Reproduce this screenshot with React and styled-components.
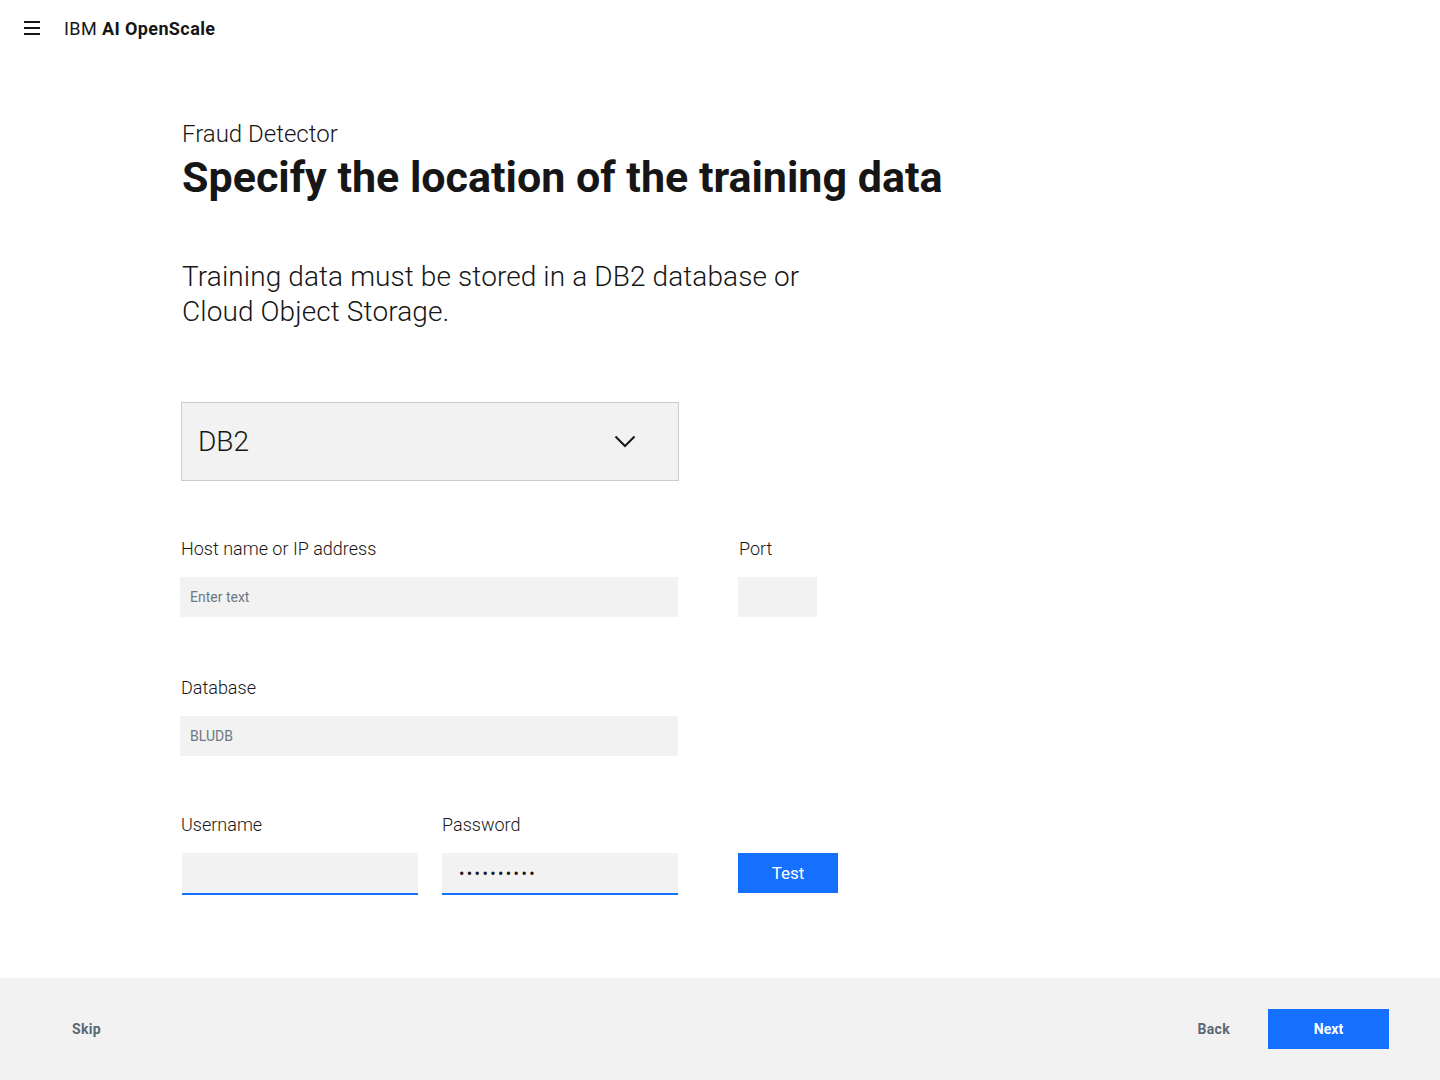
import styled, { createGlobalStyle } from "styled-components";

const GlobalStyle = createGlobalStyle`
   html, body {
      margin: 0;
      padding: 0;
      background: #fff;
      font-family: Roboto, "Noto Sans", sans-serif;
      color: #161616;
   }
   * { box-sizing: border-box; }
`

const Page = styled.div`
   min-height: 100vh;
   display: flex;
   flex-direction: column;
`

const Header = styled.header`
   height: 56px;
   display: flex;
   align-items: center;
   padding-left: 24px;
`

const Burger = styled.button`
   width: 16px;
   height: 14px;
   padding: 0;
   border: 0;
   background: none;
   display: flex;
   flex-direction: column;
   justify-content: space-between;
   margin-right: 24px;
   span {
      display: block;
      height: 2px;
      background: #161616;
   }
`

const Brand = styled.div`
   font-size: 18px;
   letter-spacing: 0.4px;
   b { font-weight: 700; }
`

const Main = styled.main`
   padding: 62px 0 0 182px;
`

const Eyebrow = styled.div`
   font-size: 24px;
   font-weight: 300;
   line-height: 32px;
`

const Title = styled.h1`
   margin: 2px 0 0;
   font-size: 43px;
   font-weight: 700;
   line-height: 50px;
`

const Lead = styled.p`
   margin: 57px 0 0;
   width: 660px;
   font-size: 28px;
   font-weight: 300;
   line-height: 35px;
   letter-spacing: 0.1px;
`

const Select = styled.div`
   margin: 73px 0 0 -1px;
   width: 498px;
   height: 79px;
   background: #f2f2f2;
   border: 1px solid #cccccc;
   display: flex;
   align-items: center;
   justify-content: space-between;
   padding: 0 42px 0 16px;
   font-size: 28px;
   font-weight: 300;
`

const Form = styled.div`
   margin-left: -2px;
`

const Row = styled.div`
   display: flex;
   gap: ${p => p.gap || 60}px;
   margin-top: ${p => p.top}px;
   align-items: flex-end;
`

const Field = styled.div`
   display: flex;
   flex-direction: column;
   width: ${p => p.w}px;
   margin-left: ${p => p.shift || 0}px;
`

const Label = styled.label`
   font-size: 18px;
   font-weight: 300;
   line-height: 24px;
   margin-left: ${p => (p.indent === undefined ? 1 : p.indent)}px;
   margin-bottom: 16px;
`

const Input = styled.div`
   height: ${p => (p.active ? 42 : 40)}px;
   margin-left: ${p => p.indent || 0}px;
   background: #f2f2f2;
   border-bottom: ${p => (p.active ? "2px solid #1670ff" : "0")};
   display: flex;
   align-items: center;
   padding-left: ${p => (p.dots ? 17 : 10)}px;
   font-size: ${p => (p.dots ? 16 : 14)}px;
   color: ${p => (p.dots ? "#161616" : "#6f7782")};
   letter-spacing: ${p => (p.dots ? "2.4px" : "0")};
`

const Button = styled.button`
   width: ${p => p.w}px;
   height: 40px;
   border: 0;
   background: #1670ff;
   color: #fff;
   font-family: Roboto, sans-serif;
   font-size: ${p => (p.small ? 14 : 17)}px;
   font-weight: ${p => (p.small ? 700 : 400)};
   display: flex;
   align-items: center;
   justify-content: center;
`

const Footer = styled.footer`
   margin-top: auto;
   height: 102px;
   background: #f2f2f2;
   display: flex;
   align-items: center;
   padding: 0 51px 0 72px;
`

const TextLink = styled.span`
   font-size: 14px;
   font-weight: 700;
   color: #5a6872;
   letter-spacing: 0.3px;
`

const Spacer = styled.div`
   flex: 1;
`

const Actions = styled.div`
   display: flex;
   align-items: center;
   gap: 38px;
`

export default function App() {
   return (
      <Page>
         <GlobalStyle />
         <Header>
            <Burger aria-label="Menu">
               <span />
               <span />
               <span />
            </Burger>
            <Brand>IBM <b>AI OpenScale</b></Brand>
         </Header>

         <Main>
            <Eyebrow>Fraud Detector</Eyebrow>
            <Title>Specify the location of the training data</Title>
            <Lead>Training data must be stored in a DB2 database or Cloud Object Storage.</Lead>

            <Select>
               DB2
               <svg width="22" height="13" viewBox="0 0 22 13" fill="none">
                  <path d="M1.5 1.5 L11 11 L20.5 1.5" stroke="#161616" strokeWidth="2" />
               </svg>
            </Select>

            <Form>
               <Row top={56}>
                  <Field w={498}>
                     <Label>Host name or IP address</Label>
                     <Input>Enter text</Input>
                  </Field>
                  <Field w={79}>
                     <Label>Port</Label>
                     <Input />
                  </Field>
               </Row>

               <Row top={59}>
                  <Field w={498}>
                     <Label>Database</Label>
                     <Input>BLUDB</Input>
                  </Field>
               </Row>

               <Row top={57} gap={24}>
                  <Field w={238}>
                     <Label>Username</Label>
                     <Input active indent={2} />
                  </Field>
                  <Field w={236}>
                     <Label indent={0}>Password</Label>
                     <Input active dots>••••••••••</Input>
                  </Field>
                  <Field w={100} shift={36}>
                     <Button w={100} style={{ marginBottom: 2 }}>Test</Button>
                  </Field>
               </Row>
            </Form>
         </Main>

         <Footer>
            <TextLink>Skip</TextLink>
            <Spacer />
            <Actions>
               <TextLink>Back</TextLink>
               <Button w={121} small>Next</Button>
            </Actions>
         </Footer>
      </Page>
   )
}
